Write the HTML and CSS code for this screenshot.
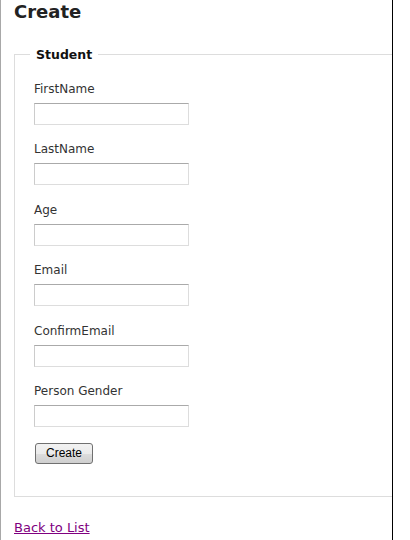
FILE: index.html
```html
<!DOCTYPE html>
<html>
<head>
<meta charset="utf-8">
<title>Create</title>
<link rel="stylesheet" href="styles.css">
</head>
<body>
<div class="page">
  <h2 class="title">Create</h2>
  <form class="form">
    <fieldset class="fs">
      <legend class="legend">Student</legend>
      <div class="field">
        <label class="label">FirstName</label>
        <input class="input" type="text">
      </div>
      <div class="field">
        <label class="label">LastName</label>
        <input class="input" type="text">
      </div>
      <div class="field">
        <label class="label">Age</label>
        <input class="input" type="text">
      </div>
      <div class="field">
        <label class="label">Email</label>
        <input class="input" type="text">
      </div>
      <div class="field">
        <label class="label">ConfirmEmail</label>
        <input class="input" type="text">
      </div>
      <div class="field">
        <label class="label">Person Gender</label>
        <input class="input" type="text">
      </div>
      <div class="actions">
        <button class="btn" type="button">Create</button>
      </div>
    </fieldset>
  </form>
  <div class="back">
    <a class="link" href="#">Back to List</a>
  </div>
</div>
</body>
</html>
```
FILE: styles.css
```css
html, body {
  margin: 0;
  padding: 0;
  background: #fff;
}
body {
  font-family: "DejaVu Sans", Verdana, sans-serif;
  color: #222;
}
.page {
  box-sizing: border-box;
  width: 393px;
  height: 540px;
  border-left: 1px solid #a8a8a8;
  border-right: 1px solid #000;
  overflow: hidden;
}
.title {
  margin: 0;
  padding: 1px 0 0 13px;
  font-size: 18px;
  font-weight: bold;
  line-height: 22px;
  color: #222;
}
.form {
  margin: 24px 0 0 13px;
}
.fs {
  margin: 0;
  border: 1px solid #ddd;
  border-right: none;
  padding: 18px 0 32px 19px;
}
.legend {
  margin-left: -4px;
  padding: 0 6px;
  font-size: 12.5px;
  font-weight: bold;
  color: #111;
}
.field {
  display: flex;
  flex-direction: column;
  align-items: flex-start;
  margin-bottom: 15.4px;
}
.label {
  font-size: 12px;
  line-height: 18px;
  color: #333;
  margin-bottom: 5px;
}
.input {
  box-sizing: border-box;
  width: 155px;
  height: 22px;
  margin: 0;
  border: 1px solid #ddd;
  border-top-color: #aaa;
  border-left-color: #ccc;
  padding: 2px;
  background: #fff;
}
.actions {
  padding-left: 1px;
}
.btn {
  box-sizing: border-box;
  width: 58px;
  height: 21px;
  border: 1px solid #707070;
  border-radius: 3px;
  background: linear-gradient(#f2f2f2, #ebebeb 50%, #dddddd 51%, #cfcfcf);
  font-family: "Liberation Sans", Arial, sans-serif;
  font-size: 12px;
  color: #000;
  padding: 0;
}
.back {
  padding: 20px 0 0 13px;
}
.link {
  font-size: 13px;
  color: #800080;
  text-decoration: underline;
}
```
